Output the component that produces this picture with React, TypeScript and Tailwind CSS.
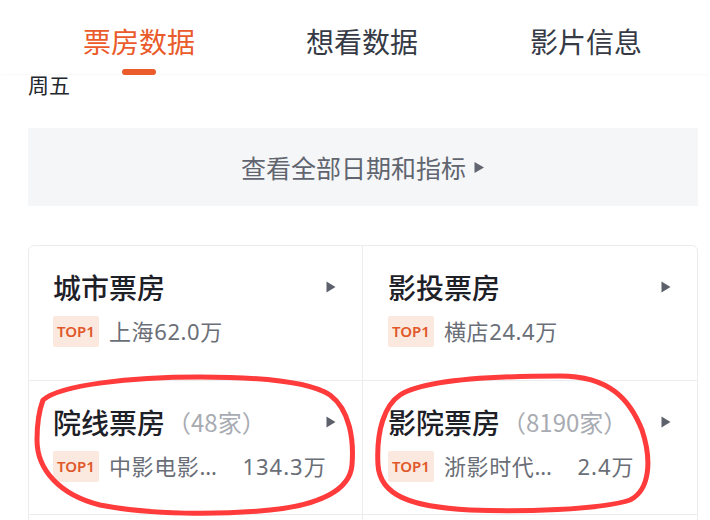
import React from "react";

const font = { fontFamily: '"Noto Sans CJK SC", "Noto Sans", sans-serif' };
const latin = { fontFamily: '"Noto Sans", "Noto Sans CJK SC", sans-serif' };

function Arrow() {
  return (
    <svg width="10" height="12" viewBox="0 0 10 12" className="shrink-0">
      <path d="M0.5 0.5 L9.5 6 L0.5 11.5 Z" fill="#5d616b" />
    </svg>
  );
}

function Badge() {
  return (
    <span
      className="flex h-[31px] w-[46px] shrink-0 items-center justify-center rounded-[2px] bg-[#fbe8de] text-[15px] font-semibold text-[#e0582a]"
      style={latin}
    >
      TOP1
    </span>
  );
}

type Cell = {
  title: string;
  count?: string;
  name: string;
  value?: string;
};

function BoxCell({ cell, right }: { cell: Cell; right?: boolean }) {
  return (
    <div className={`flex flex-col pt-[27px] pr-[26px] ${right ? "pl-[25px]" : "pl-[24px] border-r border-[#ececee]"}`}>
      <div className="flex h-[28px] items-center">
        <span className="text-[28px] leading-[28px] font-medium text-[#1e2028]">{cell.title}</span>
        {cell.count && <span className="ml-[2px] text-[24px] leading-[28px] text-[#a8abb2]">{cell.count}</span>}
        <span className="ml-auto">
          <Arrow />
        </span>
      </div>
      <div className="mt-[15px] flex items-center">
        <Badge />
        <span className="ml-[10px] text-[22px] leading-[31px] tracking-[0.6px] text-[#6a6e77]" style={latin}>
          {cell.name}
        </span>
        {cell.value && (
          <span className="ml-[25px] text-[22px] leading-[31px] tracking-[1px] text-[#6a6e77]" style={latin}>
            {cell.value}
          </span>
        )}
      </div>
    </div>
  );
}

export default function App() {
  const rows: Cell[][] = [
    [
      { title: "城市票房", name: "上海62.0万" },
      { title: "影投票房", name: "横店24.4万" },
    ],
    [
      { title: "院线票房", count: "（48家）", name: "中影电影…", value: "134.3万" },
      { title: "影院票房", count: "（8190家）", name: "浙影时代…", value: "2.4万" },
    ],
  ];

  return (
    <div className="relative h-[520px] w-[710px] overflow-hidden bg-white" style={font}>
      <header className="relative z-10 h-[74px] bg-white shadow-[0_1px_2px_rgba(0,0,0,0.03)]">
        <div className="flex gap-[110px] pl-[82px] pt-[27px]">
          <div className="flex w-[114px] flex-col items-center">
            <span className="text-[28px] leading-[28px] text-[#ea5a2a]">票房数据</span>
            <span className="mt-[14px] h-[6px] w-[34px] rounded-full bg-[#ea5a2a]" />
          </div>
          <span className="w-[114px] text-[28px] leading-[28px] text-[#363a45]">想看数据</span>
          <span className="w-[114px] text-[28px] leading-[28px] text-[#363a45]">影片信息</span>
        </div>
      </header>

      <div className="px-[28px] pr-[12px]">
        <div className="h-[20px] text-[21px] leading-[20px] text-[#25272e]">周五</div>

        <div className="mt-[34px] flex h-[78px] items-center justify-center gap-[8px] bg-[#f5f6f8]">
          <span className="text-[25px] leading-[30px] text-[#61656f]">查看全部日期和指标</span>
          <svg width="11" height="13" viewBox="0 0 11 13">
            <path d="M0.5 1 L10 6.5 L0.5 12 Z" fill="#61656f" />
          </svg>
        </div>

        <div className="mt-[39px] rounded-[6px] border border-[#ececee]">
          {rows.map((row, i) => (
            <div key={i} className={`grid h-[134px] grid-cols-[334px_1fr] ${i > 0 ? "border-t border-[#ececee]" : ""}`}>
              <BoxCell cell={row[0]} />
              <BoxCell cell={row[1]} right />
            </div>
          ))}
          <div className="grid h-[60px] grid-cols-[334px_1fr] border-t border-[#ececee]">
            <div className="border-r border-[#ececee]" />
            <div />
          </div>
        </div>
      </div>

      <svg className="pointer-events-none absolute left-0 top-0" width="710" height="520" viewBox="0 0 710 520" fill="none">
        <path
          d="M43 400 C60 385 130 377 200 377 C260 377 310 382 330 395 C350 410 354 440 352 465 C350 490 320 505 270 510 C220 515 150 515 100 505 C60 495 37 470 37 440 C37 420 40 408 43 400 Z"
          stroke="#ff3b3b"
          strokeWidth="5"
          strokeLinejoin="round"
        />
        <path
          d="M400 395 C420 382 480 376 560 376 C610 376 630 400 642 430 C652 460 650 490 630 500 C600 510 520 512 470 510 C410 507 380 495 378 465 C376 430 385 405 400 395 Z"
          stroke="#ff3b3b"
          strokeWidth="5"
          strokeLinejoin="round"
        />
      </svg>
    </div>
  );
}
